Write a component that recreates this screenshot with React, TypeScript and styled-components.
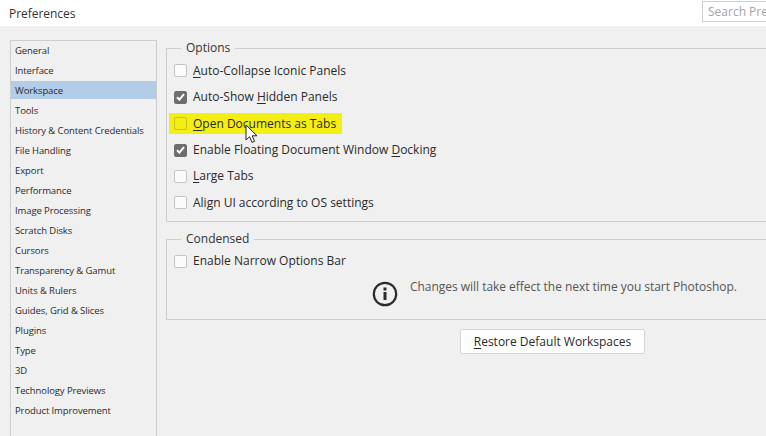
import React from "react";
import styled, { createGlobalStyle } from "styled-components";

const Global = createGlobalStyle`
  html, body { margin: 0; padding: 0; background: #f0f0f0; }
  body { font-family: "Open Sans", "Liberation Sans", sans-serif; color: #2c2c2c; }
`;

const Page = styled.div`
  width: 766px;
  height: 436px;
  overflow: hidden;
  position: relative;
  background: #f0f0f0;
`;

const TitleBar = styled.header`
  height: 26px;
  background: #fff;
  display: flex;
  align-items: flex-start;
  justify-content: space-between;
`;

const Title = styled.h1`
  margin: 6px 0 0 9px;
  font: 400 12px/16px "Open Sans", sans-serif;
  letter-spacing: -0.05px;
  color: #333;
`;

const Search = styled.div`
  flex: none;
  width: 70px;
  height: 21px;
  box-sizing: border-box;
  margin-top: 1px;
  margin-right: -6px;
  padding-left: 5px;
  border: 1px solid #cfcfcf;
  background: #fff;
  color: #a3a3a3;
  font: 400 12px/19px "Open Sans", sans-serif;
  white-space: nowrap;
  overflow: hidden;
`;

const Body = styled.div`
  display: flex;
  align-items: flex-start;
  padding: 14px 0 0 10px;
  gap: 9px;
`;

const Sidebar = styled.nav`
  flex: none;
  width: 147px;
  height: 420px;
  box-sizing: border-box;
  border: 1px solid #cdcdcd;
`;

const NavItem = styled.div<{ $active?: boolean }>`
  height: 20px;
  box-sizing: border-box;
  padding-left: 4px;
  font: 400 9.5px/20px "Open Sans", sans-serif;
  letter-spacing: -0.1px;
  color: #2a2a2a;
  background: ${(p) => (p.$active ? "linear-gradient(#b3cde8 18px, transparent 18px)" : "transparent")};
  white-space: nowrap;
`;

const Main = styled.main`
  flex: none;
  width: 620px;
  display: flex;
  flex-direction: column;
`;

const Group = styled.fieldset<{ $height: number; $gap: number }>`
  margin: 0;
  padding: 0 0 0 7px;
  height: ${(p) => p.$height}px;
  box-sizing: border-box;
  border: 1px solid #cdcdcd;
  border-right: none;
  min-width: 0;
  margin-bottom: ${(p) => p.$gap}px;
`;

const Legend = styled.legend`
  margin-left: 7px;
  padding: 0 5px;
  font: 400 12px/16px "Open Sans", sans-serif;
  color: #333;
`;

const Rows = styled.div<{ $top: number }>`
  display: flex;
  flex-direction: column;
  padding-top: ${(p) => p.$top}px;
`;

const Row = styled.label<{ $mark?: boolean }>`
  position: relative;
  height: 26.4px;
  display: flex;
  align-items: center;
  gap: 6px;
  width: fit-content;
  font: 400 12px/16px "Open Sans", sans-serif;
  color: #2a2a2a;
  white-space: nowrap;
  ${(p) =>
    p.$mark &&
    `
    background: #f3ee13;
    height: 21px;
    margin: 2.7px 0 2.7px -5px;
    padding: 0 6px 0 5px;
  `}
`;

const Box = styled.span<{ $checked?: boolean; $mark?: boolean }>`
  flex: none;
  width: 13px;
  height: 13px;
  box-sizing: border-box;
  border-radius: 2px;
  display: flex;
  align-items: center;
  justify-content: center;
  border: 1px solid ${(p) => (p.$checked ? "#6e6e6e" : p.$mark ? "#c9c41c" : "#c4c4c4")};
  background: ${(p) => (p.$checked ? "#6e6e6e" : p.$mark ? "#f3ee13" : "#fbfbfb")};
`;

const Notice = styled.div`
  display: flex;
  align-items: flex-start;
  gap: 12px;
  margin: 0 0 0 198px;
  padding-top: 7px;
`;

const NoticeText = styled.span`
  font: 400 12px/16px "Open Sans", sans-serif;
  letter-spacing: -0.03px;
  color: #555;
  white-space: nowrap;
  margin-top: -2px;
`;

const RestoreButton = styled.button`
  align-self: flex-start;
  margin-left: 294px;
  width: 185px;
  height: 25px;
  padding: 0;
  background: #fff;
  border: 1px solid #d6d6d6;
  border-radius: 2px;
  color: #2a2a2a;
  font: 400 12px/16px "Open Sans", sans-serif;
`;

const Pointer = styled.svg`
  position: absolute;
  left: 245px;
  top: 124px;
`;

const U = styled.span`
  text-decoration: underline;
  text-underline-offset: 2px;
`;

const nav = [
  "General", "Interface", "Workspace", "Tools", "History & Content Credentials", "File Handling",
  "Export", "Performance", "Image Processing", "Scratch Disks", "Cursors", "Transparency & Gamut",
  "Units & Rulers", "Guides, Grid & Slices", "Plugins", "Type", "3D", "Technology Previews", "Product Improvement",
];

const Check = () => (
  <svg width="9" height="8" viewBox="0 0 9 8" aria-hidden>
    <path d="M1 4.2 3.4 6.6 8 1.2" fill="none" stroke="#fff" strokeWidth="2" />
  </svg>
);

const Option = ({ checked, mark, children }: { checked?: boolean; mark?: boolean; children: React.ReactNode }) => (
  <Row $mark={mark}>
    <Box $checked={checked} $mark={mark}>{checked && <Check />}</Box>
    <span>{children}</span>
  </Row>
);

export default function App() {
  return (
    <Page>
      <Global />
      <TitleBar>
        <Title>Preferences</Title>
        <Search>Search Pre</Search>
      </TitleBar>
      <Body>
        <Sidebar>
          {nav.map((n) => (
            <NavItem key={n} $active={n === "Workspace"}>{n}</NavItem>
          ))}
        </Sidebar>
        <Main>
          <Group $height={182} $gap={9}>
            <Legend>Options</Legend>
            <Rows $top={1.7}>
              <Option><U>A</U>uto-Collapse Iconic Panels</Option>
              <Option checked>Auto-Show <U>H</U>idden Panels</Option>
              <Option mark><U>O</U>pen Documents as Tabs</Option>
              <Option checked>Enable Floating Document Window <U>D</U>ocking</Option>
              <Option><U>L</U>arge Tabs</Option>
              <Option>Align UI according to OS settings</Option>
            </Rows>
          </Group>
          <Group $height={89} $gap={9}>
            <Legend>Condensed</Legend>
            <Rows $top={1}>
              <Option>Enable Narrow Options Bar</Option>
            </Rows>
            <Notice>
              <svg width="26" height="26" viewBox="0 0 26 26" aria-hidden>
                <circle cx="13" cy="13" r="11.2" fill="none" stroke="#2b2b2b" strokeWidth="2.2" />
                <rect x="11.5" y="11" width="3" height="8" fill="#2b2b2b" />
                <rect x="11.5" y="6.5" width="3" height="3" fill="#2b2b2b" />
              </svg>
              <NoticeText>Changes will take effect the next time you start Photoshop.</NoticeText>
            </Notice>
          </Group>
          <RestoreButton type="button"><U>R</U>estore Default Workspaces</RestoreButton>
        </Main>
      </Body>
      <Pointer width="15" height="20" viewBox="0 0 15 20" aria-hidden>
        <path d="M1 1v15l3.6-3.3L7 18.4l2.6-1.1-2.4-5.5h4.8z" fill="#fff" stroke="#222" strokeWidth="1" />
      </Pointer>
    </Page>
  );
}
